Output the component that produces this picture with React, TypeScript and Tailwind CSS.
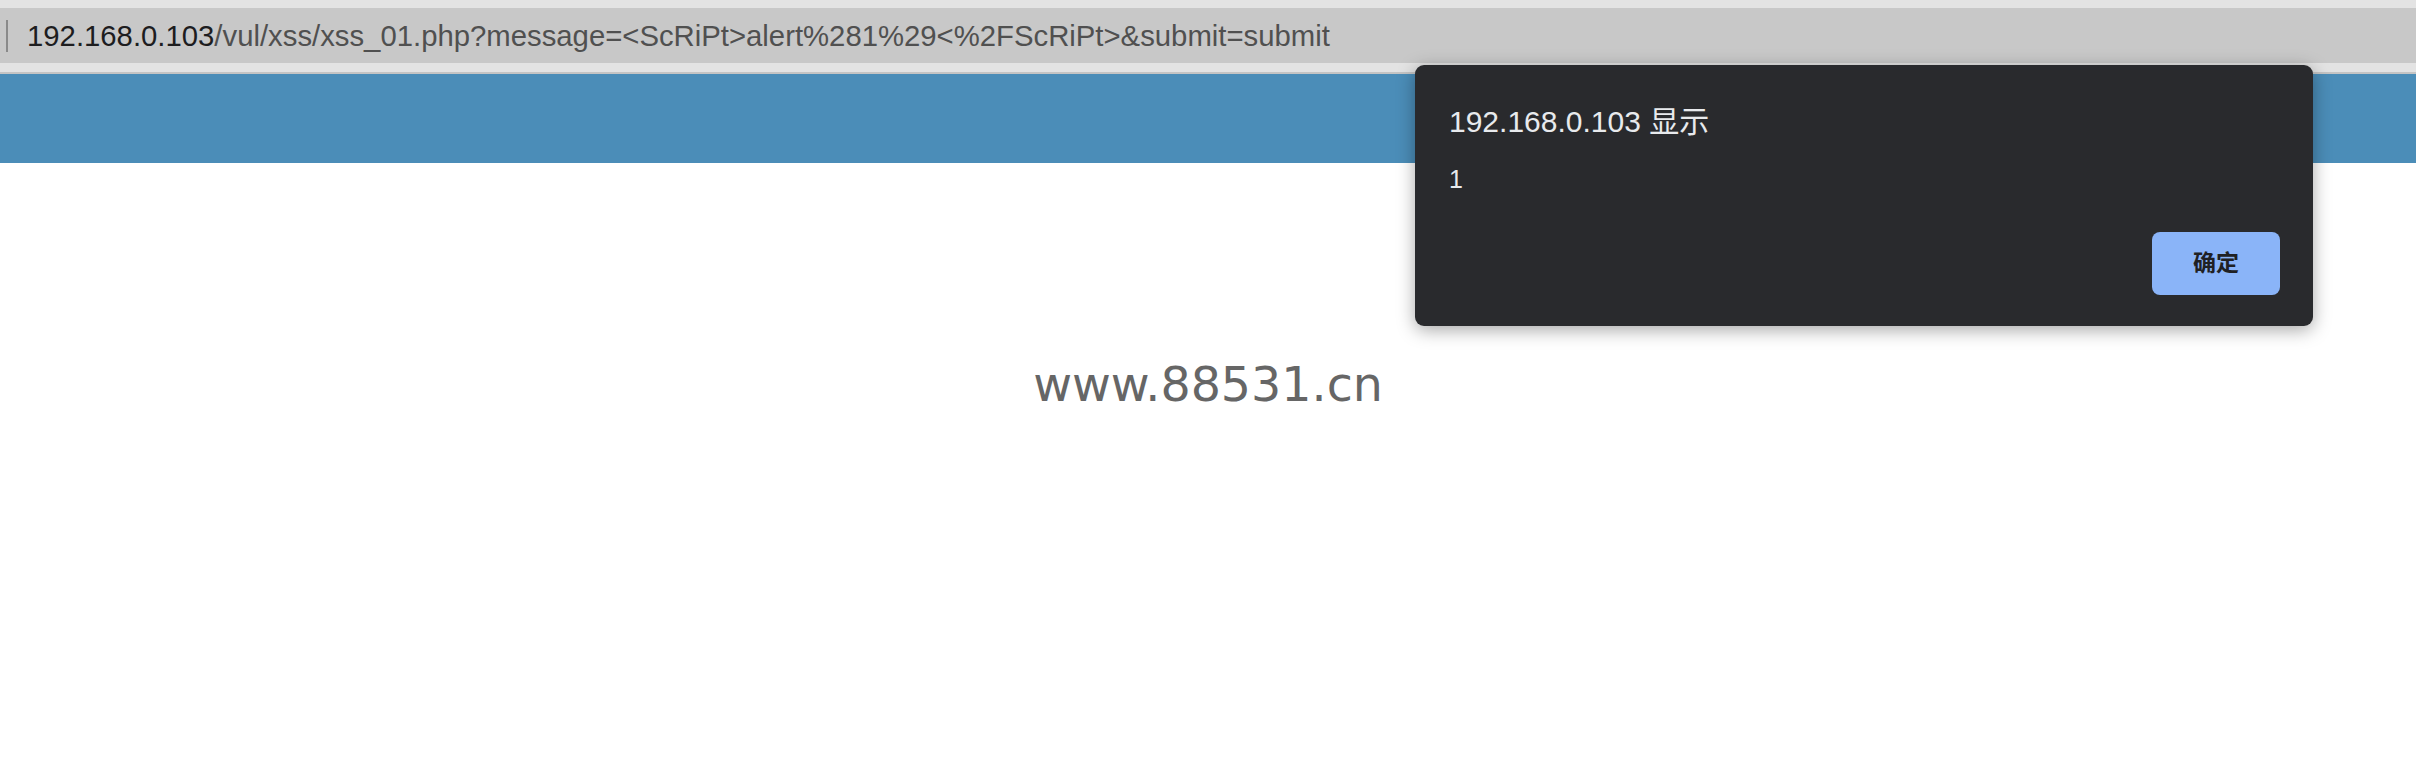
import React from "react";

export default function App() {
  const sans = { fontFamily: '"Liberation Sans", Arial, "Noto Sans CJK SC", sans-serif' };
  return (
    <div className="relative w-[2416px] h-[782px] bg-white overflow-hidden">
      {/* browser top */}
      <div className="h-[8px] bg-[#e3e3e3]" />
      <div className="h-[55px] bg-[#c8c8c8] flex items-center">
        <div className="ml-[6px] w-[2px] h-[32px] bg-[#8a8a8a]" />
        <div
          className="ml-[19px] text-[29.3px] leading-none text-[#505050] whitespace-nowrap"
          style={sans}
        >
          <span className="text-[#1d1d1f]">192.168.0.103</span>
          /vul/xss/xss_01.php?message=&lt;ScRiPt&gt;alert%281%29&lt;%2FScRiPt&gt;&amp;submit=submit
        </div>
      </div>
      <div className="h-[9px] bg-[#e3e3e3]" />
      <div className="h-[2px] bg-[#c4c4c4]" />
      {/* page banner */}
      <div className="h-[89px] bg-[#4b8db8]" />
      {/* page body */}
      <div className="pt-[198px] flex justify-center">
        <div
          className="text-[47.5px] leading-none text-[#666666]"
          style={{ fontFamily: '"DejaVu Sans", Verdana, sans-serif' }}
        >
          www.88531.cn
        </div>
      </div>

      {/* alert dialog */}
      <div
        className="absolute left-[1415px] top-[65px] w-[898px] h-[261px] rounded-[9px] bg-[#292a2d] shadow-[0_4px_18px_rgba(0,0,0,0.35)] flex flex-col"
        style={sans}
      >
        <div className="pl-[34px] pt-[42px] text-[30px] leading-none text-[#e8eaed] whitespace-nowrap">
          192.168.0.103 显示
        </div>
        <div className="pl-[34px] pt-[30px] text-[25px] leading-none text-[#e8eaed]">1</div>
        <div className="flex justify-end pr-[33px] pt-[40px]">
          <div className="w-[128px] h-[63px] rounded-[8px] bg-[#8ab4f8] flex items-center justify-center text-[23px] font-bold text-[#202124]">
            确定
          </div>
        </div>
      </div>
    </div>
  );
}
